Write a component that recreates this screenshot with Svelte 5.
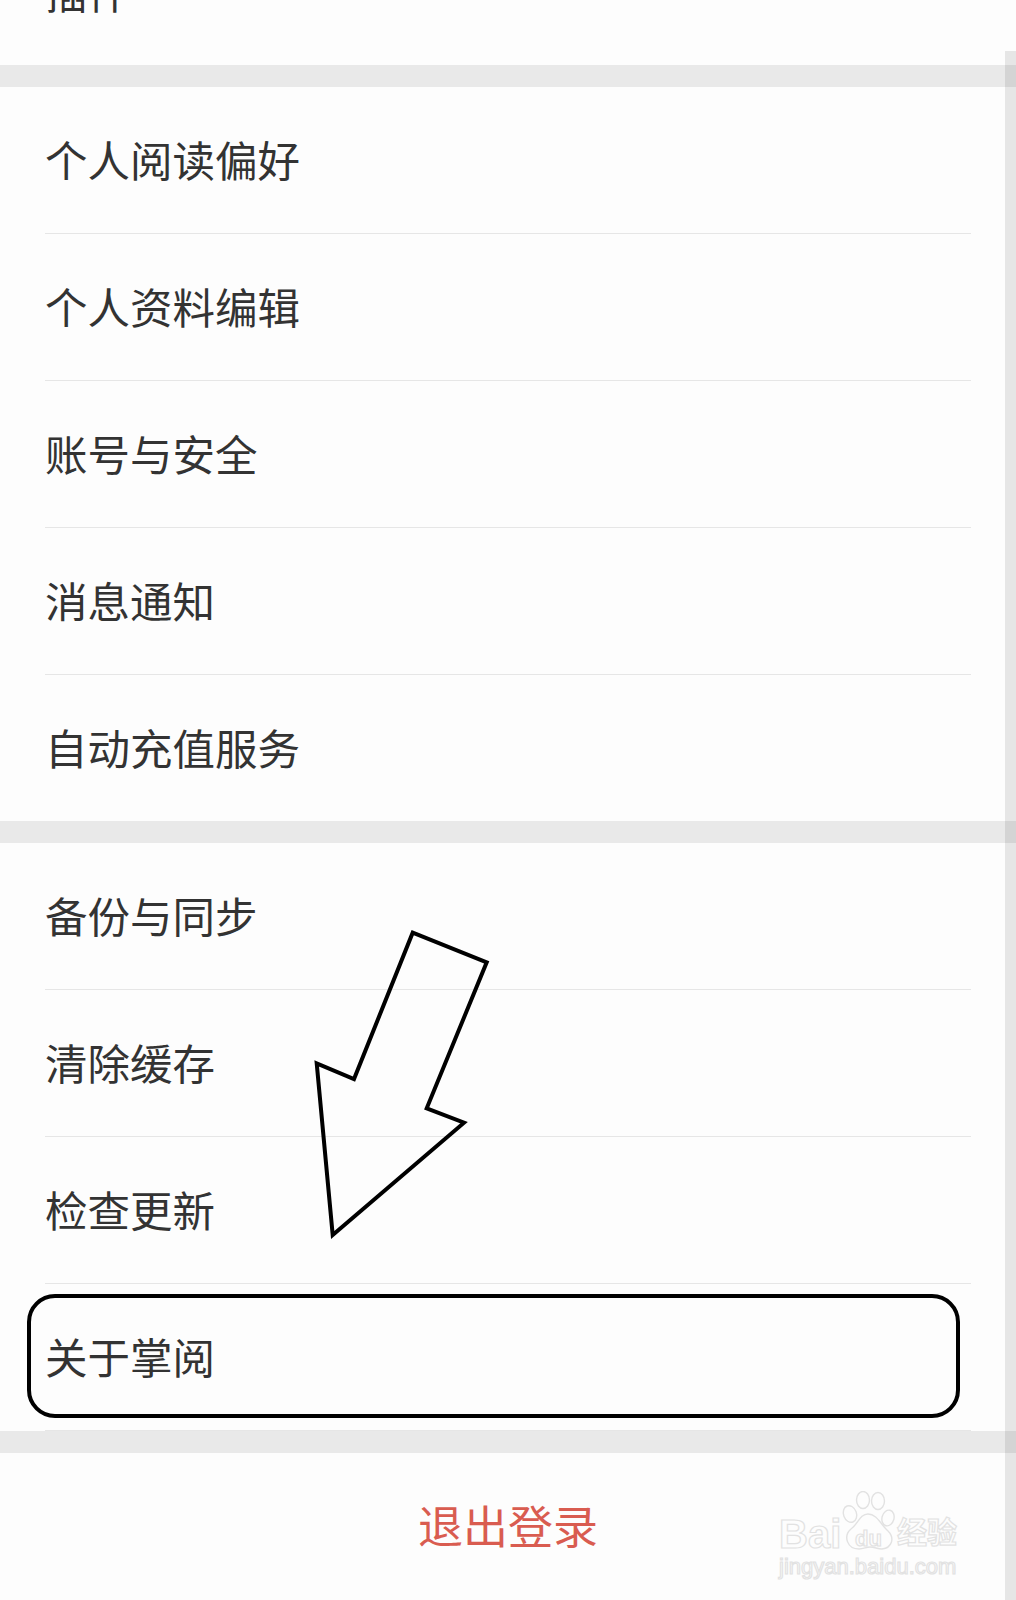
<script lang="ts">
	const sections = [
		["插件"],
		["个人阅读偏好", "个人资料编辑", "账号与安全", "消息通知", "自动充值服务"],
		["备份与同步", "清除缓存", "检查更新", "关于掌阅"],
	];
</script>

<div class="page">
	{#each sections as rows, i}
		<section class="group" class:clipped={i === 0}>
			{#each rows as label, r}
				<div class="row" class:open={i === 2 && r === rows.length - 1}>
					<span>{label}</span>
				</div>
			{/each}
		</section>
	{/each}

	<button class="logout">退出登录</button>

	<!-- annotations added on top of the screenshot -->
	<div class="callout"></div>
	<svg class="arrow" width="1016" height="1600" viewBox="0 0 1016 1600" fill="none">
		<path
			d="M412.7 932.7 486.7 962.3 426.7 1108.3 464 1122.7 332.7 1235 316.7 1063.3 354 1079Z"
			stroke="#000"
			stroke-width="4"
			stroke-linejoin="miter"
		/>
	</svg>

	<div class="scrollbar"></div>

	<div class="watermark">
		<div class="mark-top">
			<span class="mark-word">Bai</span>
			<svg class="paw" width="56" height="62" viewBox="0 0 56 62" fill="#fdfdfd" stroke="#e2e2e2" stroke-width="1.4">
				<ellipse cx="9" cy="23" rx="6.5" ry="8.5" transform="rotate(-20 9 23)" />
				<ellipse cx="22" cy="9" rx="6.5" ry="8.5" />
				<ellipse cx="37" cy="10" rx="6.5" ry="8.5" />
				<ellipse cx="47" cy="27" rx="6" ry="8" transform="rotate(15 47 27)" />
				<path d="M27 23C19 23 17 33 10 38 2 45 6 58 18 58 23 58 25 56 29 56 34 56 36 58 41 58 51 57 54 47 47 40 40 34 36 23 27 23Z" />
			</svg>
			<span class="mark-du">du</span>
			<span class="mark-cn">经验</span>
		</div>
		<div class="mark-url">jingyan.baidu.com</div>
	</div>
</div>

<style>
	:global(body) {
		margin: 0;
		background: #e9e9e9;
	}

	.page {
		position: relative;
		width: 1016px;
		height: 1600px;
		overflow: hidden;
		display: flex;
		flex-direction: column;
		gap: 22px;
		font-family: "Noto Sans CJK SC", "Liberation Sans", sans-serif;
		color: #333;
	}

	.group {
		background: #fdfdfd;
		flex: none;
	}

	.clipped {
		margin-top: -81px;
	}

	.row {
		height: 142px;
		padding-bottom: 4px;
		margin-left: 45px;
		width: 926px;
		display: flex;
		align-items: center;
		font-size: 42.5px;
		border-bottom: 1px solid #e6e6e6;
	}

	.row:last-child {
		border-bottom: none;
	}

	.row.open:last-child {
		border-bottom: 1px solid #e6e6e6;
	}

	.logout {
		flex: 1;
		border: none;
		background: #fdfdfd;
		color: #d95c50;
		font: inherit;
		font-size: 45px;
		padding: 0 0 4px;
	}

	.callout {
		position: absolute;
		left: 27px;
		top: 1294px;
		width: 933px;
		height: 124px;
		box-sizing: border-box;
		border: 4px solid #000;
		border-radius: 28px;
	}

	.arrow {
		position: absolute;
		left: 0;
		top: 0;
	}

	.scrollbar {
		position: absolute;
		right: 0;
		top: 51px;
		bottom: 0;
		width: 11px;
		background: rgba(0, 0, 0, 0.09);
	}

	.watermark {
		position: absolute;
		left: 779px;
		top: 1491px;
		width: 190px;
		color: transparent;
		font-family: "Liberation Sans", "Noto Sans CJK SC", sans-serif;
		-webkit-text-stroke: 1.2px #e2e2e2;
	}

	.mark-top {
		position: relative;
		height: 62px;
	}

	.mark-word,
	.mark-du,
	.mark-cn,
	.paw {
		position: absolute;
	}

	.mark-word {
		left: 0;
		top: 21px;
		font-size: 40px;
		line-height: 44px;
		font-weight: 700;
	}

	.paw {
		left: 62px;
		top: 0;
	}

	.mark-du {
		left: 76px;
		top: 36px;
		font-size: 22px;
		line-height: 24px;
		font-weight: 700;
	}

	.mark-cn {
		left: 118px;
		top: 24px;
		font-size: 30px;
		line-height: 36px;
		font-weight: 700;
		white-space: nowrap;
	}

	.mark-url {
		font-size: 22px;
		line-height: 26px;
		margin-top: 1px;
		white-space: nowrap;
	}
</style>
